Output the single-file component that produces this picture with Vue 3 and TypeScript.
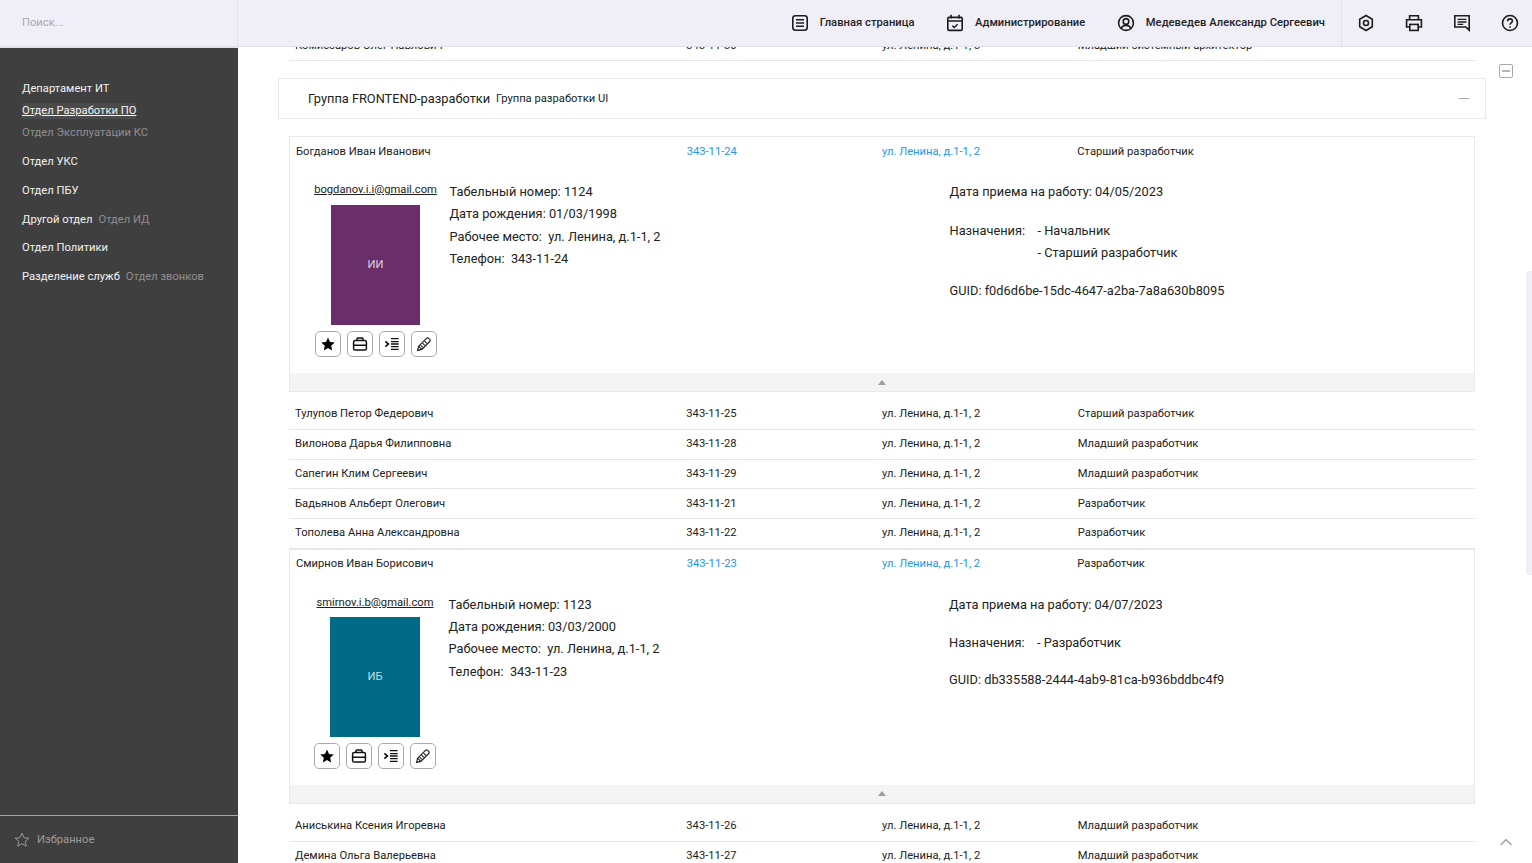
<template>
  <div class="page">
    <header class="topbar">
      <div class="search">Поиск...</div>
      <nav class="nav">
        <a class="nav-item">
          <svg width="18" height="18" viewBox="0 0 18 18" fill="none" stroke="#1c1c1c" stroke-width="1.6">
            <rect x="1.8" y="1.8" width="14.4" height="14.4" rx="2.6" />
            <path d="M5 5.8h8M5 9h8M5 12.2h8" />
          </svg>
          <span>Главная страница</span>
        </a>
        <a class="nav-item">
          <svg width="18" height="18" viewBox="0 0 18 18" fill="none" stroke="#1c1c1c" stroke-width="1.6">
            <rect x="1.8" y="3.4" width="14.4" height="13" rx="1.2" />
            <path d="M1.8 7h14.4M5 .8v3.6M13 .8v3.6" />
            <path d="M6.2 11.8l2 1.8 3.4-3.4" stroke-width="1.4" />
          </svg>
          <span>Администрирование</span>
        </a>
        <a class="nav-item">
          <svg width="18" height="18" viewBox="0 0 18 18" fill="none" stroke="#1c1c1c" stroke-width="1.6">
            <circle cx="9" cy="9" r="7.4" />
            <circle cx="9" cy="7.4" r="2.8" />
            <path d="M4.4 14.4c.6-2.2 2.4-3 4.6-3s4 .8 4.6 3" />
          </svg>
          <span>Медеведев Александр Сергеевич</span>
        </a>
      </nav>
      <div class="tools">
        <svg width="18" height="18" viewBox="0 0 18 18" fill="none" stroke="#1c1c1c" stroke-width="1.6">
          <path d="M9 1.5l6.3 3.7v7.6L9 16.5l-6.3-3.7V5.2z" />
          <circle cx="9" cy="9" r="2.5" />
        </svg>
        <svg width="18" height="18" viewBox="0 0 18 18" fill="none" stroke="#1c1c1c" stroke-width="1.6">
          <path d="M4.6 5.6V1.8h8.8v3.8M4.6 13H1.6V5.8h14.8V13h-3" />
          <rect x="4.8" y="10.4" width="8.4" height="6" />
        </svg>
        <svg width="18" height="18" viewBox="0 0 18 18" fill="none" stroke="#1c1c1c" stroke-width="1.6">
          <path d="M1.8 1.8h14.4v14.4l-3.4-3.2H1.8z" />
          <path d="M4.6 5.4h8.8M4.6 8h8.8M4.6 10.4h5.6" stroke-width="1.3" />
        </svg>
        <svg width="18" height="18" viewBox="0 0 18 18" fill="none" stroke="#1c1c1c" stroke-width="1.6">
          <circle cx="9" cy="9" r="7.5" />
          <path d="M6.6 7.2c0-1.4 1-2.3 2.4-2.3s2.4.9 2.4 2.2c0 1.8-2.4 1.8-2.4 3.6" />
          <path d="M9 12.2v1.5" />
        </svg>
      </div>
    </header>

    <div class="body">
      <aside class="sidebar">
        <ul class="menu">
          <li v-for="item in menu" :key="item.name" :class="item.cls">
            <span class="menu-name" :class="item.nameCls">{{ item.name }}</span>
            <span v-if="item.sub" class="menu-sub">{{ item.sub }}</span>
          </li>
        </ul>
        <div class="favorites">
          <svg width="16" height="16" viewBox="0 0 16 16" fill="none" stroke="#9a9a9a" stroke-width="1">
            <path d="M8 1.2l2 4.5 4.9.5-3.7 3.2 1.1 4.8L8 11.7l-4.3 2.5 1.1-4.8L1.1 6.2 6 5.7z" />
          </svg>
          Избранное
        </div>
      </aside>

      <main class="content">
        <div class="list">
          <div class="row first">
            <span>Комиссаров Олег Павлович</span><span>343-11-30</span><span>ул. Ленина, д.1-1, 3</span><span>Младший системный архитектор</span>
          </div>
        </div>

        <div class="group">
          <span class="group-title">Группа FRONTEND-разработки</span>
          <span class="group-sub">Группа разработки UI</span>
          <span class="group-minus"></span>
        </div>

        <div class="list">
          <template v-for="p in people" :key="p.name">
            <div v-if="p.detail" class="card" :class="{ compact: p.detail.compact }">
              <div class="row open">
                <span>{{ p.name }}</span>
                <span class="link">{{ p.phone }}</span>
                <span class="link">ул. Ленина, д.1-1, 2</span>
                <span>{{ p.role }}</span>
              </div>
              <div class="detail">
                <div class="photo-col">
                  <span class="email">{{ p.detail.email }}</span>
                  <div class="photo" :style="{ background: p.detail.color }">{{ p.detail.initials }}</div>
                  <div class="actions">
                    <button>
                      <svg width="16" height="16" viewBox="0 0 16 16" fill="#000">
                        <path d="M8 1.6l2 4.3 4.7.6-3.5 3.2.9 4.7L8 12.1l-4.1 2.3.9-4.7-3.5-3.2 4.7-.6z" />
                      </svg>
                    </button>
                    <button>
                      <svg width="16" height="16" viewBox="0 0 16 16" fill="none" stroke="#111" stroke-width="1.5">
                        <rect x="1.6" y="4.6" width="12.8" height="9.4" rx="1.6" />
                        <path d="M5 4.6V2.8c0-.5.4-.9.9-.9h4.2c.5 0 .9.4.9.9v1.8M1.6 9.2h12.8" />
                      </svg>
                    </button>
                    <button>
                      <svg width="16" height="16" viewBox="0 0 16 16" fill="none" stroke="#111" stroke-width="1.4">
                        <path d="M1.4 5.4L4.4 8l-3 2.6" stroke-width="1.7" />
                        <path d="M7 2.6h7.6M7 5.6h7.6M7 8h7.6M7 10.6h7.6M7 13.4h7.6" />
                      </svg>
                    </button>
                    <button>
                      <svg width="16" height="16" viewBox="0 0 16 16" fill="none" stroke="#222" stroke-width="1.2">
                        <path d="M1.6 14.4l1-4.2 7.9-7.9c.6-.6 1.5-.6 2.1 0l1.1 1.1c.6.6.6 1.5 0 2.1l-7.9 7.9z" />
                        <path d="M4.6 9.2l2.2 2.2M6.6 7.2l2.2 2.2M8.6 5.2l2.2 2.2M2.6 10.2l3.2 3.2" />
                      </svg>
                    </button>
                  </div>
                </div>
                <div class="info">
                  <div>Табельный номер: {{ p.detail.number }}</div>
                  <div>Дата рождения: {{ p.detail.birth }}</div>
                  <div>Рабочее место:&nbsp; ул. Ленина, д.1-1, 2</div>
                  <div>Телефон:&nbsp; {{ p.phone }}</div>
                </div>
                <div class="info second">
                  <div>Дата приема на работу: {{ p.detail.hired }}</div>
                  <div class="assign">
                    <span class="assign-label">Назначения:</span>
                    <div>
                      <div v-for="a in p.detail.assignments" :key="a">- {{ a }}</div>
                    </div>
                  </div>
                  <div>GUID: {{ p.detail.guid }}</div>
                </div>
              </div>
              <div class="card-foot"><i></i></div>
            </div>
            <div v-else class="row">
              <span>{{ p.name }}</span><span>{{ p.phone }}</span><span>ул. Ленина, д.1-1, 2</span><span>{{ p.role }}</span>
            </div>
          </template>
        </div>
      </main>

      <div class="side-controls">
        <span class="collapse"><i></i></span>
        <svg class="to-top" width="14" height="8" viewBox="0 0 14 8" fill="none" stroke="#a8a8a8" stroke-width="1.6">
          <path d="M1.5 7L7 1.6 12.5 7" />
        </svg>
      </div>
      <div class="scrollbar"></div>
    </div>
  </div>
</template>

<script setup lang="ts">
interface Detail {
  email: string;
  color: string;
  initials: string;
  number: string;
  birth: string;
  hired: string;
  assignments: string[];
  guid: string;
  compact?: boolean;
}

interface Person {
  name: string;
  phone: string;
  role: string;
  detail?: Detail;
}

const menu = [
  { name: 'Департамент ИТ', cls: 'tight' },
  { name: 'Отдел Разработки ПО', cls: 'tight', nameCls: 'active' },
  { name: 'Отдел Эксплуатации КС', cls: 'tight', nameCls: 'muted' },
  { name: 'Отдел УКС' },
  { name: 'Отдел ПБУ' },
  { name: 'Другой отдел', sub: 'Отдел ИД' },
  { name: 'Отдел Политики' },
  { name: 'Разделение служб', sub: 'Отдел звонков' },
];

const people: Person[] = [
  {
    name: 'Богданов Иван Иванович',
    phone: '343-11-24',
    role: 'Старший разработчик',
    detail: {
      email: 'bogdanov.i.i@gmail.com',
      color: '#6a2f6b',
      initials: 'ИИ',
      number: '1124',
      birth: '01/03/1998',
      hired: '04/05/2023',
      assignments: ['Начальник', 'Старший разработчик'],
      guid: 'f0d6d6be-15dc-4647-a2ba-7a8a630b8095',
    },
  },
  { name: 'Тулупов Петор Федерович', phone: '343-11-25', role: 'Старший разработчик' },
  { name: 'Вилонова Дарья Филипповна', phone: '343-11-28', role: 'Младший разработчик' },
  { name: 'Сапегин Клим Сергеевич', phone: '343-11-29', role: 'Младший разработчик' },
  { name: 'Бадьянов Альберт Олегович', phone: '343-11-21', role: 'Разработчик' },
  { name: 'Тополева Анна Александровна', phone: '343-11-22', role: 'Разработчик' },
  {
    name: 'Смирнов Иван Борисович',
    phone: '343-11-23',
    role: 'Разработчик',
    detail: {
      email: 'smirnov.i.b@gmail.com',
      color: '#006a87',
      initials: 'ИБ',
      number: '1123',
      birth: '03/03/2000',
      hired: '04/07/2023',
      assignments: ['Разработчик'],
      guid: 'db335588-2444-4ab9-81ca-b936bddbc4f9',
      compact: true,
    },
  },
  { name: 'Аниськина Ксения Игоревна', phone: '343-11-26', role: 'Младший разработчик' },
  { name: 'Демина Ольга Валерьевна', phone: '343-11-27', role: 'Младший разработчик' },
];
</script>

<style>
html,
body {
  margin: 0;
  overflow: hidden;
}
</style>

<style scoped>
.page {
  display: flex;
  flex-direction: column;
  height: 863px;
  overflow: hidden;
  font-family: Roboto, "Liberation Sans", sans-serif;
  color: #222;
  background: #fff;
}

.topbar {
  position: relative;
  z-index: 2;
  display: flex;
  flex: 0 0 47px;
  box-sizing: border-box;
  height: 47px;
  background: #f0eef6;
  border-bottom: 1px solid #e1dfe7;
}

.search {
  display: flex;
  align-items: center;
  box-sizing: border-box;
  width: 238px;
  padding: 0 0 1px 22px;
  font-size: 11.2px;
  color: #a9a9ad;
  border-right: 1px solid #e1dfe7;
}

.nav {
  display: flex;
  flex: 1;
  align-items: center;
  justify-content: flex-end;
  gap: 31.5px;
  padding-right: 16px;
}

.nav-item {
  display: flex;
  align-items: center;
  gap: 11px;
  font-size: 11.2px;
  font-weight: 500;
  letter-spacing: 0.03px;
  color: #222;
}

.nav-item span {
  margin-bottom: 2px;
}

.tools {
  display: flex;
  align-items: center;
  gap: 30px;
  box-sizing: border-box;
  width: 191px;
  padding-left: 15px;
  border-left: 1px solid #e1dfe7;
}

.body {
  position: relative;
  display: flex;
  flex: 1;
  min-height: 0;
}

.sidebar {
  display: flex;
  flex: 0 0 238px;
  flex-direction: column;
  justify-content: space-between;
  box-sizing: border-box;
  padding-top: 30px;
  background: #3f3f3f;
  border-top: 1px solid #e1dfe7;
}

.menu {
  margin: 0;
  padding: 0 0 0 22px;
  list-style: none;
  font-size: 11.2px;
  line-height: 22px;
  color: #f2f2f2;
}

.menu li {
  display: flex;
  gap: 6px;
  height: 29px;
  align-items: flex-start;
}

.menu li.tight {
  height: 22px;
}

.menu li:nth-child(3) {
  height: 29px;
}

.menu li:nth-child(6) {
  height: 28px;
}

.menu-name.active {
  text-decoration: underline;
  background: #4a4a4a;
  line-height: 16px;
  margin-top: 3px;
}

.menu-name.muted,
.menu-sub {
  color: #8f8f8f;
}

.favorites {
  display: flex;
  align-items: center;
  gap: 7px;
  height: 48px;
  box-sizing: border-box;
  padding-left: 14px;
  font-size: 11.2px;
  color: #9a9a9a;
  border-top: 1px solid #a6a6a6;
}

.content {
  flex: 1;
  min-width: 0;
  padding: 0 47px 0 40px;
  overflow: hidden;
}

.list {
  width: 1186px;
  margin-left: 11px;
}

.row {
  display: grid;
  grid-template-columns: 2fr 1fr 1fr 2fr;
  align-items: center;
  box-sizing: border-box;
  height: 29.75px;
  padding: 0 6px 1px;
  font-size: 11.2px;
  color: #222;
  border-bottom: 1px solid #e6e6e6;
}

.row.first {
  margin-top: -17px;
  height: 31px;
  padding-bottom: 0;
}

.row.open {
  border-bottom: 0;
  padding-bottom: 0;
  height: 29px;
}

.compact .row.open {
  height: 27px;
}

.link {
  color: #2196f3;
}

.group {
  display: flex;
  align-items: center;
  box-sizing: border-box;
  width: 1208px;
  height: 41px;
  margin: 17px 0 17px;
  padding: 0 16px 0 29px;
  border: 1px solid #e9e9e9;
}

.group-title {
  font-size: 12.8px;
  color: #222;
}

.group-sub {
  margin-left: 6px;
  font-size: 11.2px;
}

.group-minus {
  width: 10px;
  height: 1px;
  margin-left: auto;
  background: #a9a9a9;
}

.card {
  box-sizing: border-box;
  height: 256px;
  margin-bottom: 8px;
  border: 1px solid #e9e9e9;
}

.card.compact {
  height: 255px;
}

.detail {
  display: flex;
  height: 207px;
  padding: 17px 0 0 24px;
  box-sizing: border-box;
}

.compact .detail {
  height: 208px;
  padding-top: 19px;
}

.photo-col {
  display: flex;
  flex: 0 0 123px;
  flex-direction: column;
  align-items: center;
}

.compact .photo-col {
  flex-basis: 122px;
}

.email {
  font-size: 11.2px;
  line-height: 14px;
  color: #222;
  text-decoration: underline;
}

.photo {
  display: flex;
  align-items: center;
  justify-content: center;
  box-sizing: border-box;
  width: 89px;
  height: 120px;
  margin-top: 8px;
  padding-bottom: 2px;
  font-size: 11.2px;
  color: rgba(255, 255, 255, 0.78);
}

.compact .photo {
  width: 90px;
  margin-top: 7px;
  padding-bottom: 0;
}

.actions {
  display: flex;
  gap: 6px;
  margin-top: 6px;
}

.actions button {
  display: flex;
  align-items: center;
  justify-content: center;
  box-sizing: border-box;
  width: 26px;
  height: 26px;
  padding: 0;
  background: #fff;
  border: 1px solid #aaa;
  border-radius: 5px;
}

.info {
  flex: 0 0 500px;
  margin-left: 12.5px;
  margin-top: -2px;
  font-size: 12.8px;
  line-height: 22.3px;
  color: #222;
}

.compact .info {
  flex-basis: 500.5px;
  margin-top: -2px;
}

.info.second {
  margin-left: 0;
}

.assign {
  display: flex;
  margin: 16.5px 0 15.5px;
}

.compact .assign {
  margin-top: 15.5px;
}

.assign-label {
  width: 88px;
}

.card-foot {
  display: flex;
  align-items: center;
  justify-content: center;
  height: 18px;
  background: #f4f4f4;
}

.card-foot i {
  width: 0;
  height: 0;
  border-right: 4px solid transparent;
  border-bottom: 5px solid #9e9e9e;
  border-left: 4px solid transparent;
}

.side-controls {
  position: absolute;
  top: 17px;
  right: 19px;
  bottom: 17px;
  display: flex;
  flex-direction: column;
  align-items: center;
  justify-content: space-between;
}

.collapse {
  display: flex;
  align-items: center;
  justify-content: center;
  box-sizing: border-box;
  width: 14px;
  height: 14px;
  border: 1px solid #a8a8a8;
  border-radius: 2px;
}

.collapse i {
  width: 8px;
  height: 2px;
  background: #b5b5b5;
}

.scrollbar {
  position: absolute;
  top: 224px;
  right: 0;
  width: 6px;
  height: 304px;
  background: #f0eef6;
  border-radius: 3px 0 0 3px;
}
</style>
